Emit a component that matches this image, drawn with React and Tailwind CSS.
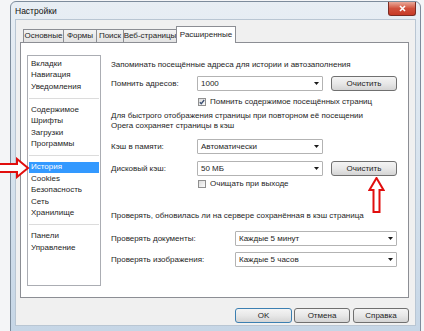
import React from "react";

const sections = [
  ["Вкладки", "Навигация", "Уведомления"],
  ["Содержимое", "Шрифты", "Загрузки", "Программы"],
  ["История", "Cookies", "Безопасность", "Сеть", "Хранилище"],
  ["Панели", "Управление"],
];

const tabs = [
  { label: "Основные", w: "w-[41px]" },
  { label: "Формы", w: "w-[34px]" },
  { label: "Поиск", w: "w-[28px]" },
  { label: "Веб-страницы", w: "w-[54px]" },
];

const Combo = ({ value, className }) => (
  <div
    className={`h-[15px] border border-[#b3b3b3] rounded-[1px] bg-white flex items-center pl-[3px] pr-[3px] ${className}`}
  >
    <span className="flex-1 leading-none">{value}</span>
    <svg width="5" height="3" viewBox="0 0 5 3">
      <path d="M0 0h5L2.5 3z" fill="#1a1a1a" />
    </svg>
  </div>
);

const Btn = ({ children, className = "" }) => (
  <div
    className={`h-[15px] rounded-[3px] border bg-linear-to-b from-[#f4f4f4] via-[#e8e8e8] to-[#d4d4d4] flex items-center justify-center leading-none ${className}`}
  >
    {children}
  </div>
);

const Check = ({ checked }) => (
  <div className="w-[8px] h-[8px] border border-[#8f8f8f] bg-linear-to-br from-[#dcdcdc] to-[#fbfbfb] flex items-center justify-center">
    {checked && (
      <svg width="6" height="6" viewBox="0 0 6 6">
        <path d="M0.8 3.2L2.3 4.7L5.2 1" stroke="#3b4f73" strokeWidth="1.3" fill="none" />
      </svg>
    )}
  </div>
);

export default function App() {
  return (
    <div className="relative w-[424px] h-[331px] overflow-hidden bg-[#f4f5f7] pl-[10px] pt-[1px] font-['Liberation_Sans',sans-serif] text-[8px] text-[#1e1e1e]">
      {/* Window */}
      <div className="w-[411px] h-[331px] rounded-t-[6px] border border-[#7d8c9c] bg-linear-to-b from-[#e8eef4] via-[#d7e3ee] to-[#c6d6e6] px-[4px] flex flex-col">
        {/* Title bar */}
        <div className="h-[17px] flex items-start justify-between">
          <span className="pt-[5px] text-[8.5px] leading-none text-[#111]">Настройки</span>
          <div className="w-[28px] h-[14px] rounded-b-[3px] border border-t-0 border-[#7a2b22] bg-linear-to-b from-[#e9a99a] via-[#d0503c] to-[#c73a26] flex items-center justify-center">
            <svg width="7" height="7" viewBox="0 0 7 7">
              <path d="M1 1L6 6M6 1L1 6" stroke="#fff" strokeWidth="1.6" />
            </svg>
          </div>
        </div>

        {/* Client area */}
        <div className="h-[307px] bg-[#f0f0f0] border border-[#b9c6d3] pl-[4px] pr-[6px] pt-[6px] flex flex-col">
          {/* Tabs */}
          <div className="flex items-end pl-[3px] h-[16px]">
            {tabs.map((t) => (
              <div
                key={t.label}
                className={`${t.w} h-[13px] -mr-px border border-[#8c8e94] border-b-0 bg-linear-to-b from-[#f3f3f3] to-[#e3e3e3] flex items-center justify-center leading-none whitespace-nowrap`}
              >
                {t.label}
              </div>
            ))}
            <div className="relative z-10 w-[60px] h-[17px] -mb-px border border-[#8c8e94] border-b-0 bg-white flex items-center justify-center leading-none whitespace-nowrap">
              Расширенные
            </div>
          </div>

          {/* Tab panel */}
          <div className="h-[256px] border border-[#8c8e94] bg-white flex items-start pl-[6px]">
            {/* List */}
            <div className="mt-[12px] w-[74px] h-[231px] border border-[#abadb3] pt-[2px] px-px flex flex-col">
              {sections.map((group, gi) => (
                <div key={gi} className="flex flex-col">
                  {gi > 0 && (
                    <div className="h-[11.5px] flex items-center">
                      <div className="w-full h-px bg-[#dcdcdc]" />
                    </div>
                  )}
                  {group.map((item) => (
                    <div
                      key={item}
                      className={`h-[11.5px] flex items-center pl-[2px] leading-none ${
                        item === "История" ? "bg-[#3399ff] text-white" : ""
                      }`}
                    >
                      {item}
                    </div>
                  ))}
                </div>
              ))}
            </div>

            {/* Settings */}
            <div className="ml-[10px] flex flex-col pt-[17px]">
              <div className="h-[10px] flex items-center leading-none">
                Запоминать посещённые адреса для истории и автозаполнения
              </div>

              <div className="mt-[6px] flex items-center h-[15px]">
                <span className="w-[86px] leading-none">Помнить адресов:</span>
                <Combo value="1000" className="w-[126px]" />
                <Btn className="ml-[8px] w-[66px] border-[#707070]">Очистить</Btn>
              </div>

              <div className="mt-[5px] h-[12px] flex items-center pl-[87px] gap-[4px]">
                <Check checked />
                <span className="leading-none">Помнить содержимое посещённых страниц</span>
              </div>

              <div className="mt-[3px] flex flex-col leading-[10px]">
                <span>Для быстрого отображения страницы при повторном её посещении</span>
                <span>Opera сохраняет страницы в кэш</span>
              </div>

              <div className="mt-[8px] flex items-center h-[15px]">
                <span className="w-[86px] leading-none">Кэш в памяти:</span>
                <Combo value="Автоматически" className="w-[126px]" />
              </div>

              <div className="mt-[7px] flex items-center h-[15px]">
                <span className="w-[86px] leading-none">Дисковый кэш:</span>
                <Combo value="50 МБ" className="w-[126px]" />
                <Btn className="ml-[8px] w-[66px] border-[#707070]">Очистить</Btn>
              </div>

              <div className="mt-[2px] h-[12px] flex items-center pl-[87px] gap-[4px]">
                <Check />
                <span className="leading-none">Очищать при выходе</span>
              </div>

              <div className="mt-[21px] h-[10px] flex items-center leading-none">
                Проверять, обновилась ли на сервере сохранённая в кэш страница
              </div>

              <div className="mt-[10px] flex items-center h-[15px]">
                <span className="w-[124px] leading-none">Проверять документы:</span>
                <Combo value="Каждые 5 минут" className="w-[162px]" />
              </div>

              <div className="mt-[6px] flex items-center h-[15px]">
                <span className="w-[124px] leading-none">Проверять изображения:</span>
                <Combo value="Каждые 5 часов" className="w-[162px]" />
              </div>
            </div>
          </div>

          {/* Dialog buttons */}
          <div className="mt-[10px] flex justify-end">
            <Btn className="w-[57px] border-[#3c7fb1] from-[#eef5fa] to-[#d2dde6]">OK</Btn>
            <Btn className="ml-[2px] w-[56px] border-[#707070]">Отмена</Btn>
            <Btn className="ml-[3px] w-[56px] border-[#707070]">Справка</Btn>
          </div>
        </div>
      </div>

      {/* Annotation arrows */}
      <svg className="absolute left-0 top-[157px]" width="30" height="22" viewBox="0 0 30 22">
        <path d="M-1 7H17V2L28 11L17 20V15H-1Z" fill="#fff" stroke="#e10e0e" strokeWidth="2" strokeLinejoin="miter" />
      </svg>
      <svg className="absolute left-[368px] top-[177px]" width="17" height="37" viewBox="0 0 17 37">
        <path d="M8.5 1L15.5 13H11.5V35H5.5V13H1.5Z" fill="#fff" stroke="#e10e0e" strokeWidth="2" />
      </svg>
    </div>
  );
}
